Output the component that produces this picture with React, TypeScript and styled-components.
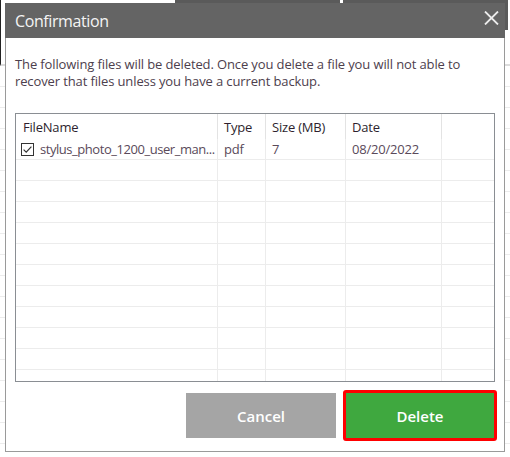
import styled, { createGlobalStyle } from "styled-components";

const GlobalStyle = createGlobalStyle`
  html, body {
    margin: 0;
    padding: 0;
    background: #fff;
    overflow: hidden;
  }
  * {
    box-sizing: border-box;
  }
`;

// the grid shows the name already shortened, as the reference does
const files = [
  { name: "stylus_photo_1200_user_man...", type: "pdf", size: "7", date: "08/20/2022" },
];

const EMPTY_ROWS = 11;

const Checkbox = () => (
  <svg width="13" height="13" viewBox="0 0 13 13">
    <rect x="0.5" y="0.5" width="12" height="12" fill="#fff" stroke="#333" />
    <path d="M2.6 6.6 L5.2 9.1 L10.4 3.6" fill="none" stroke="#333" strokeWidth="1.2" />
  </svg>
);

const CloseIcon = () => (
  <svg width="15" height="14" viewBox="0 0 15 14">
    <path d="M1 0.5 L14 13.5 M14 0.5 L1 13.5" stroke="#ececec" strokeWidth="1.8" />
  </svg>
);

const App = () => {
  return (
    <>
      <GlobalStyle />
      <Page>
        <Backdrop>
          <TabStrip>
            <Tab $active $width={171} />
            <Tab $width={165} />
            <Tab $width={165} />
          </TabStrip>
          {Array.from({ length: 18 }).map((_, i) => (
            <BackRow key={i}>
              <span />
              <span />
              <span />
              <span />
            </BackRow>
          ))}
        </Backdrop>

        <Dialog>
          <Header>
            <Title>Confirmation</Title>
            <CloseButton type="button" aria-label="Close">
              <CloseIcon />
            </CloseButton>
          </Header>
          <Body>
            <Message>
              The following files will be deleted. Once you delete a file you will not able to
              recover that files unless you have a current backup.
            </Message>
            <Table>
              <HeadRow>
                <HeadCell>FileName</HeadCell>
                <HeadCell>Type</HeadCell>
                <HeadCell>Size (MB)</HeadCell>
                <HeadCell>Date</HeadCell>
                <HeadCell />
              </HeadRow>
              <Rows>
                {files.map((file) => (
                  <Row key={file.name}>
                    <Cell>
                      <Checkbox />
                      <FileName>{file.name}</FileName>
                    </Cell>
                    <Cell>{file.type}</Cell>
                    <Cell>{file.size}</Cell>
                    <Cell>{file.date}</Cell>
                    <Cell />
                  </Row>
                ))}
                {Array.from({ length: EMPTY_ROWS }).map((_, i) => (
                  <Row key={i}>
                    <Cell />
                    <Cell />
                    <Cell />
                    <Cell />
                    <Cell />
                  </Row>
                ))}
              </Rows>
            </Table>
            <Actions>
              <Button type="button" $variant="cancel">
                Cancel
              </Button>
              <Button type="button" $variant="delete">
                Delete
              </Button>
            </Actions>
          </Body>
        </Dialog>
      </Page>
    </>
  );
};

export default App;

const Page = styled.div`
  position: relative;
  width: 510px;
  height: 457px;
  overflow: hidden;
  font-family: "Open Sans", "Noto Sans", sans-serif;
`;

const Backdrop = styled.div`
  display: flex;
  flex-direction: column;
`;

const TabStrip = styled.div`
  display: flex;
  gap: 3px;
  height: 66px;
  border-left: 1px solid #222;
  border-bottom: 2px solid #dcdcdc;
`;

const Tab = styled.div<{ $active?: boolean; $width: number }>`
  width: ${(p) => p.$width}px;
  height: 30px;
  background: ${(p) => (p.$active ? "#fff" : "#5a5a5a")};
`;

const BackRow = styled.div`
  display: grid;
  grid-template-columns: 7px 48px 80px 96px 1fr;
  height: 21px;
  border-bottom: 1px solid #ececec;

  span {
    border-right: 1px solid #ececec;
  }
`;

const Dialog = styled.div`
  position: absolute;
  top: 3px;
  left: 5px;
  width: 500px;
  height: 449px;
  display: flex;
  flex-direction: column;
  background: #fff;
  border: 1px solid #9a9a9a;
  border-top: none;
`;

const Header = styled.div`
  display: flex;
  align-items: center;
  justify-content: space-between;
  height: 35px;
  margin: 0 -1px;
  padding: 0 6px 0 10px;
  background: #646464;
`;

const Title = styled.h2`
  margin: 0;
  font-size: 16px;
  font-weight: 400;
  color: #f4f4f4;
  letter-spacing: -0.4px;
`;

const CloseButton = styled.button`
  display: flex;
  padding: 0;
  margin-top: -6px;
  border: none;
  background: none;
  cursor: pointer;
`;

const Body = styled.div`
  display: flex;
  flex-direction: column;
  padding: 18px 9px 10px 9px;
`;

const Message = styled.p`
  max-width: 462px;
  margin: 0 0 23px;
  height: 34px;
  font-size: 13px;
  line-height: 17px;
  color: #4d404d;
  letter-spacing: -0.12px;
`;

const Table = styled.div`
  display: flex;
  flex-direction: column;
  height: 269px;
  border: 1px solid #8a8e93;
  overflow: hidden;
`;

const HeadRow = styled.div`
  display: grid;
  grid-template-columns: 202px 48px 80px 96px 1fr;
  height: 25px;
  flex-shrink: 0;
`;

const HeadCell = styled.div`
  display: flex;
  align-items: center;
  padding-left: 6px;
  font-size: 13px;
  color: #2e1f2e;
  border-right: 1px solid #e3e3e3;
  letter-spacing: -0.2px;

  &:first-child {
    padding-left: 7px;
  }

  &:last-child {
    border-right: none;
  }
`;

const Rows = styled.div`
  display: flex;
  flex-direction: column;
`;

const Row = styled.div`
  display: grid;
  grid-template-columns: 202px 48px 80px 96px 1fr;
  height: 21px;
  flex-shrink: 0;
  border-bottom: 1px solid #ececec;
`;

const Cell = styled.div`
  display: flex;
  align-items: center;
  gap: 6px;
  min-width: 0;
  padding-left: 6px;
  font-size: 13px;
  color: #5a4a5a;
  border-right: 1px solid #ececec;
  letter-spacing: -0.2px;
  white-space: nowrap;

  &:first-child {
    padding-left: 5px;
  }

  &:last-child {
    border-right: none;
  }

  svg {
    flex-shrink: 0;
  }
`;

const FileName = styled.span`
  letter-spacing: -0.45px;
`;

const Actions = styled.div`
  display: flex;
  justify-content: flex-end;
  align-items: center;
  gap: 7px;
  height: 51px;
  margin: 8px -2px 0 0;
`;

const Button = styled.button<{ $variant: "cancel" | "delete" }>`
  display: flex;
  align-items: center;
  justify-content: center;
  width: ${(p) => (p.$variant === "delete" ? "154px" : "150px")};
  height: ${(p) => (p.$variant === "delete" ? "51px" : "45px")};
  padding: 0;
  font-family: "Open Sans", "Noto Sans", sans-serif;
  font-size: 15px;
  font-weight: 600;
  color: #fff;
  background: ${(p) => (p.$variant === "delete" ? "#3fa83f" : "#a5a5a5")};
  border: ${(p) => (p.$variant === "delete" ? "3px solid #ff0000" : "none")};
  border-radius: ${(p) => (p.$variant === "delete" ? "3px" : "0")};
  cursor: pointer;
`;
